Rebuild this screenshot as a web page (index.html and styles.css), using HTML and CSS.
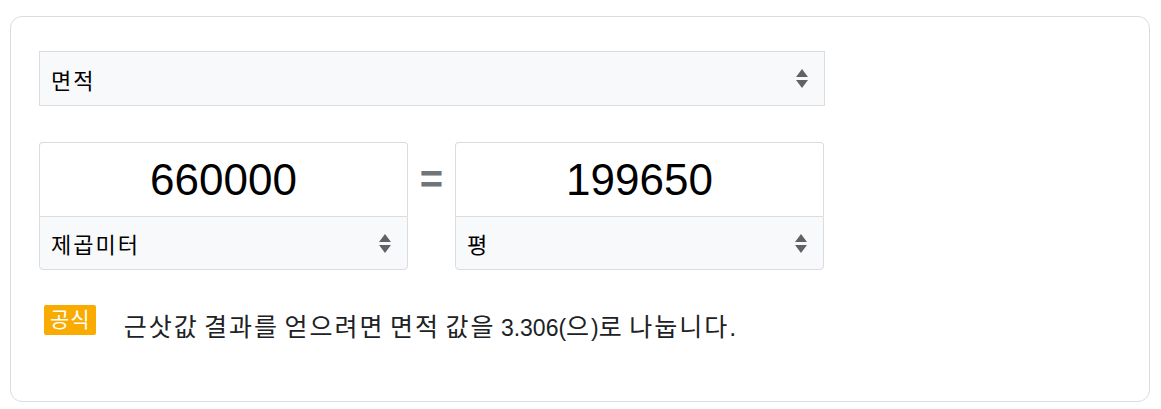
FILE: index.html
```html
<!DOCTYPE html>
<html lang="ko">
  <head>
    <meta charset="UTF-8" />
    <meta name="viewport" content="width=device-width, initial-scale=1.0" />
    <title>단위 변환기</title>
    <link rel="stylesheet" href="styles.css">
  </head>
  <body>
    <main class="converter">
      <div class="picker picker-main">
        <span>면적</span>
        <svg class="arrows" width="12" height="19" viewBox="0 0 12 19" aria-hidden="true">
          <path d="M6 0L12 8H0Z M0 11H12L6 19Z" fill="#5f6368" />
        </svg>
      </div>

      <div class="pair">
        <div class="unit">
          <div class="value">660000</div>
          <div class="picker picker-unit">
            <span>제곱미터</span>
            <svg class="arrows" width="12" height="19" viewBox="0 0 12 19" aria-hidden="true">
              <path d="M6 0L12 8H0Z M0 11H12L6 19Z" fill="#5f6368" />
            </svg>
          </div>
        </div>
        <div class="equals">=</div>
        <div class="unit">
          <div class="value">199650</div>
          <div class="picker picker-unit">
            <span>평</span>
            <svg class="arrows" width="12" height="19" viewBox="0 0 12 19" aria-hidden="true">
              <path d="M6 0L12 8H0Z M0 11H12L6 19Z" fill="#5f6368" />
            </svg>
          </div>
        </div>
      </div>

      <p class="formula">
        <span class="badge">공식</span>
        <span class="formula-text">근삿값 결과를 얻으려면 면적 값을 <span class="num">3.306(</span>으<span class="num">)</span>로 나눕니다.</span>
      </p>
    </main>
  </body>
</html>
```

FILE: styles.css
```css
body {
  margin: 0;
  padding: 16px 11px 7px 10px;
  font-family: "Liberation Sans", Arial, "Noto Sans CJK KR", sans-serif;
  color: #202124;
  background-color: #fff;
}
.converter {
  box-sizing: border-box;
  height: 386px;
  border: 1px solid #dadce0;
  border-radius: 12px;
  padding: 34px 28px 0;
}
.picker {
  display: flex;
  align-items: center;
  justify-content: space-between;
  box-sizing: border-box;
  background-color: #f8f9fa;
  border: 1px solid #dadce0;
  color: #000;
  font-size: 22px;
  letter-spacing: 2px;
}
.picker-main {
  width: 786px;
  height: 55px;
  padding: 0 16px 0 11px;
}
.picker-unit {
  height: 54px;
  padding: 0 16px 0 11px;
  border-radius: 0 0 4px 4px;
}
.arrows {
  flex: none;
}
.pair {
  display: flex;
  align-items: flex-start;
  width: 785px;
  margin-top: 36px;
}
.unit {
  width: 369px;
}
.value {
  box-sizing: border-box;
  height: 74px;
  border: 1px solid #dadce0;
  border-bottom: none;
  border-radius: 4px 4px 0 0;
  text-align: center;
  font-size: 44px;
  line-height: 74px;
  color: #000;
}
.equals {
  width: 47px;
  text-align: center;
  font-size: 40px;
  font-weight: bold;
  color: #70757a;
  line-height: 74px;
}
.formula {
  display: flex;
  align-items: flex-start;
  gap: 28px;
  margin: 35px 0 0 5px;
}
.badge {
  background-color: #f9ab00;
  color: #fff;
  font-size: 21px;
  letter-spacing: 1px;
  line-height: 30px;
  padding: 0 5px 0 6px;
  border-radius: 2px;
}
.formula-text {
  margin-top: 7px;
  font-size: 25px;
  line-height: 30px;
  letter-spacing: 2px;
  word-spacing: -3.5px;
  color: #202124;
}
.formula-text .num {
  font-size: 23px;
  letter-spacing: 0;
}
```
